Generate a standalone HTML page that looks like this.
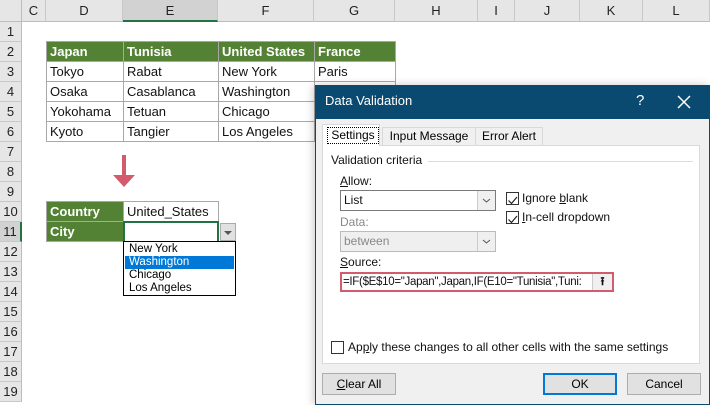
<!DOCTYPE html><html><head><style>
body{margin:0;width:710px;height:405px;overflow:hidden;background:#fff;font-family:"Liberation Sans",sans-serif;position:relative}
.a{position:absolute;box-sizing:border-box}
.ch{top:0;height:22px;background:#e6e6e6;border-right:1px solid #c8c8c8;border-bottom:1px solid #bdbdbd;font-size:13px;color:#222;text-align:center;line-height:22px}
.rh{left:0;width:22px;height:20px;background:#e6e6e6;border-bottom:1px solid #c8c8c8;border-right:1px solid #bdbdbd;font-size:13px;color:#222;text-align:center;line-height:20px}
.c{height:21px;border:1px solid #a8a8a8;font-size:13px;line-height:19px;padding-left:3px;color:#111}
.g{background:#548235;color:#fff;font-weight:bold}
.d{font-size:12px;color:#111}
.cb{width:13px;height:13px;border:1px solid #333;background:#fff}
.btn{height:22px;background:#e1e1e1;border:1px solid #adadad;font-size:12px;text-align:center;line-height:20px}
</style></head><body>
<div class="a" style="left:0;top:0;width:22px;height:22px;background:#e6e6e6;border-right:1px solid #bdbdbd;border-bottom:1px solid #bdbdbd"></div>
<div class="a ch" style="left:22px;width:24px">C</div>
<div class="a ch" style="left:46px;width:77px">D</div>
<div class="a ch" style="left:123px;width:95px;background:#d2d2d2;border-bottom:2px solid #217346">E</div>
<div class="a ch" style="left:218px;width:96px">F</div>
<div class="a ch" style="left:314px;width:81px">G</div>
<div class="a ch" style="left:395px;width:83px">H</div>
<div class="a ch" style="left:478px;width:37px">I</div>
<div class="a ch" style="left:515px;width:65px">J</div>
<div class="a ch" style="left:580px;width:63px">K</div>
<div class="a ch" style="left:643px;width:67px">L</div>
<div class="a rh" style="top:22px">1</div><div class="a rh" style="top:42px">2</div><div class="a rh" style="top:62px">3</div><div class="a rh" style="top:82px">4</div><div class="a rh" style="top:102px">5</div><div class="a rh" style="top:122px">6</div><div class="a rh" style="top:142px">7</div><div class="a rh" style="top:162px">8</div><div class="a rh" style="top:182px">9</div><div class="a rh" style="top:202px">10</div><div class="a rh" style="top:222px;background:#d2d2d2;border-right:2px solid #217346">11</div><div class="a rh" style="top:242px">12</div><div class="a rh" style="top:262px">13</div><div class="a rh" style="top:282px">14</div><div class="a rh" style="top:302px">15</div><div class="a rh" style="top:322px">16</div><div class="a rh" style="top:342px">17</div><div class="a rh" style="top:362px">18</div><div class="a rh" style="top:382px">19</div>
<!-- table -->
<div class="a c g" style="left:46px;top:41px;width:78px">Japan</div><div class="a c g" style="left:123px;top:41px;width:96px">Tunisia</div><div class="a c g" style="left:218px;top:41px;width:97px">United States</div><div class="a c g" style="left:314px;top:41px;width:82px">France</div>
<div class="a c" style="left:46px;top:61px;width:78px">Tokyo</div><div class="a c" style="left:123px;top:61px;width:96px">Rabat</div><div class="a c" style="left:218px;top:61px;width:97px">New York</div><div class="a c" style="left:314px;top:61px;width:82px">Paris</div>
<div class="a c" style="left:46px;top:81px;width:78px">Osaka</div><div class="a c" style="left:123px;top:81px;width:96px">Casablanca</div><div class="a c" style="left:218px;top:81px;width:97px">Washington</div><div class="a c" style="left:314px;top:81px;width:82px"></div>
<div class="a c" style="left:46px;top:101px;width:78px">Yokohama</div><div class="a c" style="left:123px;top:101px;width:96px">Tetuan</div><div class="a c" style="left:218px;top:101px;width:97px">Chicago</div><div class="a c" style="left:314px;top:101px;width:82px"></div>
<div class="a c" style="left:46px;top:121px;width:78px">Kyoto</div><div class="a c" style="left:123px;top:121px;width:96px">Tangier</div><div class="a c" style="left:218px;top:121px;width:97px">Los Angeles</div><div class="a c" style="left:314px;top:121px;width:82px"></div>
<svg class="a" style="left:112px;top:153px" width="24" height="36"><rect x="10" y="2" width="4" height="24" fill="#d35b6e"/><path d="M1 22 L12 34 L23 22 Z" fill="#d35b6e"/></svg>
<div class="a c g" style="left:46px;top:201px;width:78px">Country</div><div class="a c" style="left:123px;top:201px;width:96px">United_States</div>
<div class="a c g" style="left:46px;top:221px;width:78px">City</div>
<div class="a" style="left:123px;top:221px;width:96px;height:22px;border:2px solid #217346;background:#fff"></div>
<div class="a" style="left:220px;top:223px;width:16px;height:18px;background:#e1e1e1;border:1px solid #aaa"><svg width="14" height="16"><path d="M3 7 L11 7 L7 11Z" fill="#555"/></svg></div>
<div class="a" style="left:123px;top:241px;width:113px;height:55px;border:1px solid #000;background:#fff;font-size:11.5px;line-height:13px;padding:1px 0 0 1px">
<div style="padding-left:4px">New York</div><div style="padding-left:4px;background:#0078d7;color:#fff;margin-right:1px">Washington</div><div style="padding-left:4px">Chicago</div><div style="padding-left:4px">Los Angeles</div></div>
<!-- dialog -->
<div class="a" style="left:315px;top:85px;width:395px;height:320px;background:#f0f0f0;border:1px solid #0b4a70;box-shadow:-2px 0 8px rgba(0,0,0,.2)"></div>
<div class="a" style="left:315px;top:85px;width:395px;height:34px;background:#0b4a70;color:#fff;font-size:13px;line-height:32px;padding-left:10px">Data Validation<span style="position:absolute;left:321px;font-size:15px">?</span><svg style="position:absolute;left:362px;top:10px" width="14" height="14"><path d="M1 1L13 13M13 1L1 13" stroke="#fff" stroke-width="1.5"/></svg></div>
<div class="a" style="left:322px;top:145px;width:378px;height:219px;background:#fff;border:1px solid #d9d9d9"></div>
<div class="a" style="left:322px;top:124px;width:58px;height:22px;background:#fff;border:1px solid #d9d9d9;border-bottom:none"></div>
<div class="a" style="left:327px;top:127px;width:52px;height:17px;border:1px dotted #000;font-size:12px;line-height:15px;text-align:center">Settings</div>
<div class="a" style="left:382px;top:127px;width:94px;height:18px;background:#f0f0f0;border:1px solid #d9d9d9;border-bottom:none;font-size:12px;line-height:17px;text-align:center">Input Message</div>
<div class="a" style="left:475px;top:127px;width:68px;height:18px;background:#f0f0f0;border:1px solid #d9d9d9;border-bottom:none;font-size:12px;line-height:17px;text-align:center">Error Alert</div>
<div class="a d" style="left:331px;top:153px">Validation criteria</div>
<div class="a" style="left:428px;top:161px;width:265px;height:1px;background:#dcdcdc"></div>
<div class="a d" style="left:340px;top:174px"><u>A</u>llow:</div>
<div class="a d" style="left:340px;top:190px;width:156px;height:21px;border:1px solid #7a7a7a;background:#fff;line-height:19px;padding-left:3px">List<div style="position:absolute;right:0;top:0;width:17px;height:19px;border-left:1px solid #ccc;background:#f0f0f0"><svg width="17" height="19"><path d="M5 8L8.5 11L12 8" stroke="#555" fill="none"/></svg></div></div>
<div class="a cb" style="left:506px;top:192px"><svg width="11" height="11"><path d="M1.5 5.5L4.5 8.5L10 2" stroke="#222" fill="none" stroke-width="1.2"/></svg></div>
<div class="a d" style="left:522px;top:191px">Ignore <u>b</u>lank</div>
<div class="a cb" style="left:506px;top:211px"><svg width="11" height="11"><path d="M1.5 5.5L4.5 8.5L10 2" stroke="#222" fill="none" stroke-width="1.2"/></svg></div>
<div class="a d" style="left:522px;top:210px"><u>I</u>n-cell dropdown</div>
<div class="a d" style="left:340px;top:215px;color:#888">Data:</div>
<div class="a d" style="left:340px;top:231px;width:156px;height:21px;border:1px solid #bbb;background:#efefef;line-height:19px;padding-left:3px;color:#888">between<div style="position:absolute;right:0;top:0;width:17px;height:19px;border-left:1px solid #ccc"><svg width="17" height="19"><path d="M5 8L8.5 11L12 8" stroke="#555" fill="none"/></svg></div></div>
<div class="a d" style="left:340px;top:255px"><u>S</u>ource:</div>
<div class="a" style="left:340px;top:272px;width:274px;height:20px;border:2px solid #d35b6e;background:#fff;line-height:16px;padding-left:1px;white-space:nowrap;overflow:hidden;font-size:11.5px;letter-spacing:-0.3px;color:#111">=IF($E$10="Japan",Japan,IF(E10="Tunisia",Tuni:<div style="position:absolute;right:0;top:0;width:19px;height:16px;border-left:1px solid #ccc;background:#f0f0f0;text-align:center;font-weight:bold;letter-spacing:0">&#x2B71;</div></div>
<div class="a cb" style="left:331px;top:341px"></div>
<div class="a d" style="left:348px;top:340px">Ap<u>p</u>ly these changes to all other cells with the same settings</div>
<div class="a btn" style="left:322px;top:373px;width:74px"><u>C</u>lear All</div>
<div class="a btn" style="left:543px;top:373px;width:74px;border:2px solid #0078d7;line-height:18px">OK</div>
<div class="a btn" style="left:627px;top:373px;width:74px">Cancel</div>
</body></html>
